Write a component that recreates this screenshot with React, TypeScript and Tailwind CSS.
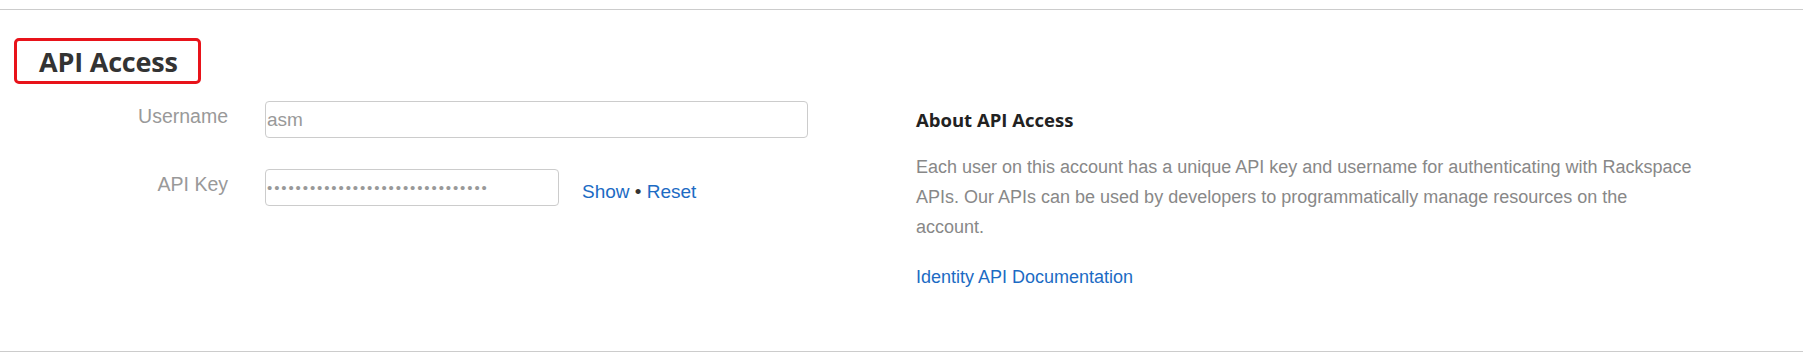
import React from 'react';

const labelCls =
  "w-[228px] shrink-0 pt-[3px] text-right text-[19.5px] leading-[24px] text-[#999] font-['Liberation_Sans',Arial,sans-serif]";

const inputCls =
  'h-[37px] rounded-[4px] border border-[#ccc] bg-white pl-[1px] text-[#999] outline-none';

const App: React.FC = () => {
  return (
    <div className="min-h-[356px] w-full bg-white pt-[9px]">
      <section className="h-[343px] w-[1803px] border-t border-b border-[#ccc]">
        {/* Title (annotated with a red box) */}
        <div className="ml-[14px] mt-[28px] flex h-[46px] w-[187px] items-center rounded-[5px] border-[3px] border-[#e8131a] pl-[22px]">
          <h2 className="font-['Open_Sans',Arial,sans-serif] text-[27px] font-bold leading-none tracking-[-0.2px] text-[#333]">
            API Access
          </h2>
        </div>

        <div className="flex items-start pt-[17px]">
          {/* Form */}
          <div className="w-[916px] shrink-0">
            <div className="flex items-start">
              <label className={labelCls}>Username</label>
              <input
                readOnly
                value="asm"
                className={`${inputCls} ml-[37px] w-[543px] font-['Liberation_Sans',Arial,sans-serif] text-[19px]`}
              />
            </div>
            <div className="mt-[31px] flex items-start">
              <label className={labelCls}>API Key</label>
              <input
                readOnly
                type="password"
                value="xxxxxxxxxxxxxxxxxxxxxxxxxxxxxxx"
                className={`${inputCls} ml-[37px] w-[294px] font-['Liberation_Sans',Arial,sans-serif] text-[15px] tracking-[1.9px]`}
              />
              <div className="ml-[23px] pt-[11px] font-['Liberation_Sans',Arial,sans-serif] text-[19px] leading-[24px] text-[#333]">
                <a href="#" className="text-[#1c6bc4]">Show</a>
                <span> • </span>
                <a href="#" className="text-[#1c6bc4]">Reset</a>
              </div>
            </div>
          </div>

          {/* About */}
          <div className="mt-[7px] w-[840px]">
            <h3 className="font-['Open_Sans',Arial,sans-serif] text-[18.5px] font-bold leading-[24px] text-[#222]">
              About API Access
            </h3>
            <p className="mt-[20px] font-['Liberation_Sans',Arial,sans-serif] text-[18px] leading-[30px] text-[#888]">
              Each user on this account has a unique API key and username for authenticating with Rackspace
              <br />
              APIs. Our APIs can be used by developers to programmatically manage resources on the
              <br />
              account.
            </p>
            <a
              href="#"
              className="mt-[20px] block font-['Liberation_Sans',Arial,sans-serif] text-[18px] leading-[30px] text-[#1c6bc4]"
            >
              Identity API Documentation
            </a>
          </div>
        </div>
      </section>
    </div>
  );
};

export default App;
